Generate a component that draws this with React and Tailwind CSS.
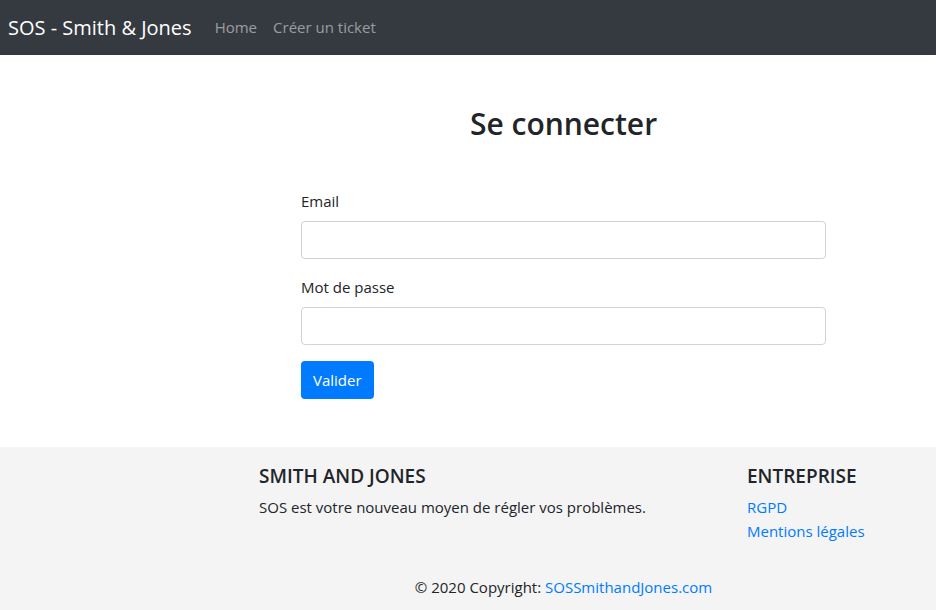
import React from 'react';

const App = () => {
  return (
    <div className="min-h-[610px] bg-white text-[#212529] font-['Open_Sans',sans-serif] text-[15px]">
      <nav className="h-[55px] bg-[#343a40] flex items-center pl-2">
        <a href="#" className="text-white text-[20px] mr-[15px]">SOS - Smith &amp; Jones</a>
        <a href="#" className="text-white/50 px-2">Home</a>
        <a href="#" className="text-white/50 px-2">Créer un ticket</a>
      </nav>

      <main className="h-[392px] pt-[49px]">
        <div className="ml-[301px] w-[525px]">
          <h2 className="text-center text-[30px] font-semibold leading-10 mb-[45px]">Se connecter</h2>
          <form onSubmit={(e) => e.preventDefault()}>
            <div className="mb-[16px]">
              <label htmlFor="email" className="block leading-6 mb-[8px]">Email</label>
              <input id="email" type="email" className="block w-full h-[38px] border border-[#ced4da] rounded bg-white px-3" />
            </div>
            <div className="mb-[16px]">
              <label htmlFor="password" className="block leading-6 mb-[8px]">Mot de passe</label>
              <input id="password" type="password" className="block w-full h-[38px] border border-[#ced4da] rounded bg-white px-3" />
            </div>
            <button type="submit" className="h-[38px] px-3 bg-[#007bff] text-white rounded">Valider</button>
          </form>
        </div>
      </main>

      <footer className="bg-[#f4f4f4] h-[163px] pt-[17px]">
        <div className="flex">
          <div className="ml-[259px] w-[488px]">
            <h5 className="text-[19px] font-semibold leading-6 mb-[7px]">SMITH AND JONES</h5>
            <p className="leading-6">SOS est votre nouveau moyen de régler vos problèmes.</p>
          </div>
          <div>
            <h5 className="text-[19px] font-semibold leading-6 mb-[7px]">ENTREPRISE</h5>
            <ul className="leading-6">
              <li><a href="#" className="text-[#007bff]">RGPD</a></li>
              <li><a href="#" className="text-[#007bff]">Mentions légales</a></li>
            </ul>
          </div>
        </div>
        <div className="ml-[301px] w-[525px] text-center mt-[32px] leading-6">
          © 2020 Copyright: <a href="#" className="text-[#007bff]">SOSSmithandJones.com</a>
        </div>
      </footer>
    </div>
  );
};

export default App;
